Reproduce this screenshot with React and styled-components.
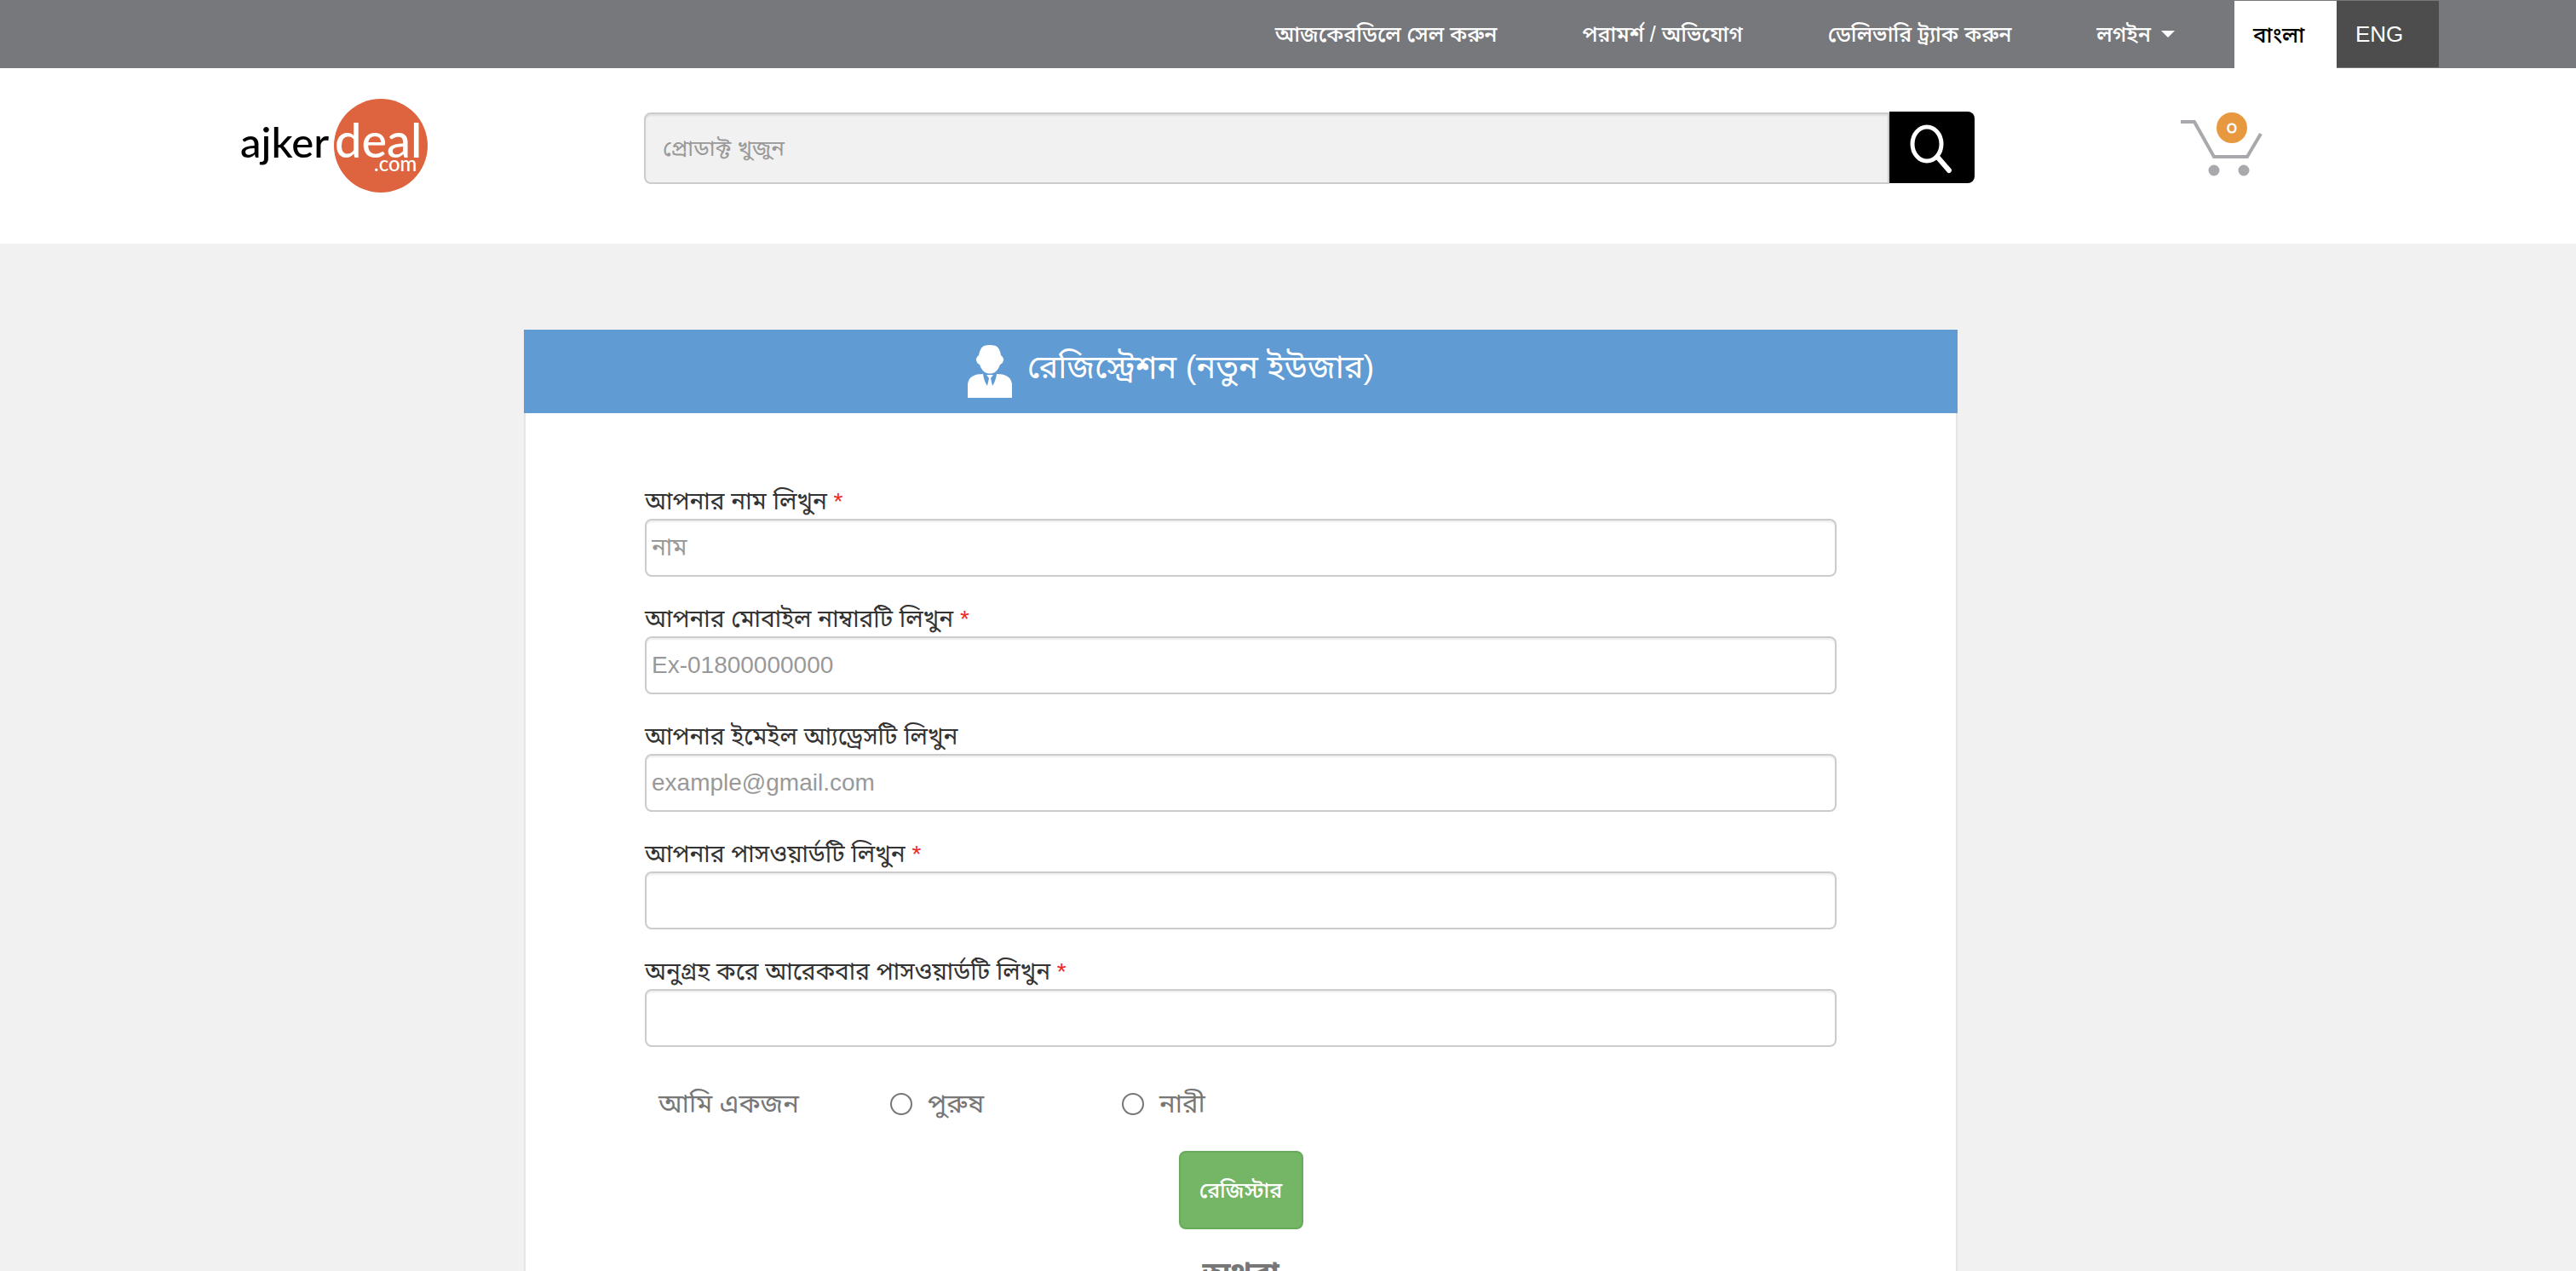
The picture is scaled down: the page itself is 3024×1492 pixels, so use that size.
import React from 'react';
import styled, { createGlobalStyle } from 'styled-components';

const Global = createGlobalStyle`
  *, *::before, *::after { box-sizing: border-box; }
  body {
    margin: 0;
    background: #f1f1f1;
    color: #333;
    font-family: "Liberation Sans", "Noto Sans Bengali", sans-serif;
    font-size: 28px;
    line-height: 40px;
  }
  #root { overflow: hidden; height: 100vh; }
  input, button { font: inherit; }
`;

const TopBar = styled.nav`
  display: flex;
  justify-content: flex-end;
  height: 80px;
  padding-right: 161px;
  background: #77787b;
  font-size: 25px;
`;

const NavLink = styled.a`
  display: flex;
  align-items: center;
  padding: 0 50px;
  color: #fff;
  font-weight: 500;
  text-decoration: none;
  white-space: nowrap;
`;

const Caret = styled.span`
  margin-left: 12px;
  border: 8px solid transparent;
  border-top-color: #fff;
  border-bottom: 0;
`;

const Languages = styled.div`
  display: flex;
  margin-left: 20px;
  padding-top: 1px;
`;

const Language = styled.button`
  width: 120px;
  height: ${(p) => (p.$active ? 79 : 78)}px;
  padding: 0 22px;
  border: 0;
  text-align: left;
  font-size: 26px;
  font-weight: 500;
  color: ${(p) => (p.$active ? '#000' : '#fff')};
  background: ${(p) => (p.$active ? '#fff' : '#4d4d4d')};
`;

const Header = styled.header`
  display: grid;
  grid-template-columns: minmax(0, 756fr) minmax(0, 1562fr) minmax(0, 706fr);
  align-items: start;
  height: 206px;
  padding-top: 35px;
  background: #fff;
`;

const LogoLink = styled.a`
  justify-self: end;
  padding-right: 252px;
  svg { display: block; }
`;

const Search = styled.form`
  display: flex;
  padding-top: 16px;
`;

const SearchInput = styled.input`
  flex: 1;
  min-width: 0;
  height: 84px;
  margin-top: 1px;
  padding: 0 20px;
  border: 2px solid #ccc;
  border-radius: 8px 0 0 8px;
  background: #f1f1f1;
  box-shadow: inset 0 2px 2px rgba(0, 0, 0, 0.075);
  font-size: 26px;
  &::placeholder { color: #999; opacity: 1; }
`;

const SearchButton = styled.button`
  width: 100px;
  height: 84px;
  padding: 0;
  border: 0;
  border-radius: 0 8px 8px 0;
  background: #000;
  svg { display: block; }
`;

const Cart = styled.a`
  position: relative;
  justify-self: start;
  margin: 16px 0 0 242px;
  svg { display: block; }
`;

const Badge = styled.span`
  position: absolute;
  top: 1px;
  left: 42px;
  width: 36px;
  height: 36px;
  border-radius: 50%;
  background: #e8983e;
  color: #fff;
  font-size: 24px;
  font-weight: 500;
  line-height: 36px;
  text-align: center;
`;

const Main = styled.main`
  display: grid;
  grid-template-columns: minmax(0, 615fr) minmax(0, 1683fr) minmax(0, 726fr);
  padding-top: 101px;
`;

const Card = styled.section`
  grid-column: 2;
  background: #fff;
  border: solid #e5e5e5;
  border-width: 0 2px;
`;

const CardHeader = styled.h1`
  display: flex;
  align-items: center;
  justify-content: center;
  gap: 18px;
  height: 98px;
  margin: 0 -2px;
  padding-right: 164px;
  background: #619bd4;
  color: #fff;
  font-size: 38px;
  font-weight: 400;
  white-space: nowrap;
`;

const CardTitle = styled.span`
  padding-bottom: 10px;
`;

const Form = styled.form`
  padding: 84px 140px 60px;
`;

const Field = styled.div`
  display: flex;
  flex-direction: column;
  margin-bottom: 30px;
`;

const Label = styled.label`
  height: 40px;
  white-space: nowrap;
`;

const Required = styled.span`
  color: #f0281e;
`;

const TextInput = styled.input`
  width: 100%;
  height: 68px;
  padding: 0 6px;
  border: 2px solid #ccc;
  border-radius: 8px;
  background: #fff;
  box-shadow: inset 0 2px 2px rgba(0, 0, 0, 0.075);
  &::placeholder { color: #999; opacity: 1; }
`;

const Gender = styled.div`
  display: flex;
  align-items: center;
  height: 50px;
  margin: 42px 0 30px;
  padding-left: 16px;
  color: #777;
  font-size: 31px;
`;

const GenderTitle = styled.span`
  width: 272px;
`;

const Choice = styled.label`
  display: flex;
  align-items: center;
  gap: 18px;
  width: 272px;
`;

const Radio = styled.input`
  appearance: none;
  width: 26px;
  height: 26px;
  margin: 0;
  border: 2px solid #767676;
  border-radius: 50%;
  background: #fff;
  &:checked { border-width: 8px; }
`;

const Actions = styled.div`
  display: flex;
  flex-direction: column;
  align-items: center;
  gap: 32px;
`;

const Submit = styled.button`
  width: 146px;
  height: 92px;
  padding: 0;
  border: 2px solid #67ac5b;
  border-radius: 8px;
  background: #74b566;
  color: #fff;
  font-size: 25px;
  font-weight: 500;
`;

const Or = styled.strong`
  color: #777;
  font-size: 36px;
`;

const Logo = () => (
  <svg width="222" height="112" viewBox="0 0 222 112" role="img" aria-label="ajkerdeal.com">
    <circle cx="165" cy="56" r="55" fill="#dd643e" />
    <g fontFamily="Lato, sans-serif" fontWeight="500">
      <text x="0" y="70" fontSize="49" fill="#000">ajker</text>
      <text x="111" y="70" fontSize="56" fill="#fff">deal</text>
      <text x="157" y="86" fontSize="24" fill="#fff">.com</text>
    </g>
  </svg>
);

const SearchIcon = () => (
  <svg width="100" height="84" fill="none" stroke="#fff" strokeLinecap="round">
    <ellipse cx="44" cy="38" rx="17" ry="20" strokeWidth="5" />
    <path d="M57 54 70 69" strokeWidth="6" />
  </svg>
);

const CartIcon = () => (
  <svg width="100" height="78" fill="none">
    <path d="M0 12H16L39 53H78L94 26" stroke="#a7a9ac" strokeWidth="4" />
    <circle cx="39" cy="69" r="6.5" fill="#a7a9ac" />
    <circle cx="74" cy="69" r="6.5" fill="#a7a9ac" />
  </svg>
);

const UserIcon = () => (
  <svg width="52" height="62" fill="#fff">
    <path d="M19 1Q26 -1 33 1Q38 4 39 12Q43 15 42 18Q41 22 38 23Q36 29 32 32Q26 35 20 32Q16 29 14 23Q11 22 10 18Q9 15 13 12Q14 4 19 1Z" />
    <path d="M0 62V46C1 37 8 34 18 34Q19 42 23 48L25 39L22 35H30L27 39L29 48Q33 42 34 34C44 34 51 37 52 46V62Z" />
  </svg>
);

const navItems = ['আজকেরডিলে সেল করুন', 'পরামর্শ / অভিযোগ', 'ডেলিভারি ট্র্যাক করুন'];

const fields = [
  { id: 'name', label: 'আপনার নাম লিখুন', placeholder: 'নাম', type: 'text', required: true },
  { id: 'mobile', label: 'আপনার মোবাইল নাম্বারটি লিখুন', placeholder: 'Ex-01800000000', type: 'tel', required: true },
  { id: 'email', label: 'আপনার ইমেইল আ্যড্রেসটি লিখুন', placeholder: 'example@gmail.com', type: 'email' },
  { id: 'password', label: 'আপনার পাসওয়ার্ডটি লিখুন', type: 'password', required: true },
  { id: 'confirm', label: 'অনুগ্রহ করে আরেকবার পাসওয়ার্ডটি লিখুন', type: 'password', required: true },
];

export default function App() {
  return (
    <>
      <Global />
      <TopBar>
        {navItems.map((item) => (
          <NavLink href="#" key={item}>{item}</NavLink>
        ))}
        <NavLink href="#">লগইন<Caret /></NavLink>
        <Languages>
          <Language type="button" $active>বাংলা</Language>
          <Language type="button">ENG</Language>
        </Languages>
      </TopBar>
      <Header>
        <LogoLink href="#"><Logo /></LogoLink>
        <Search>
          <SearchInput type="text" placeholder="প্রোডাক্ট খুজুন" aria-label="প্রোডাক্ট খুজুন" />
          <SearchButton type="button" aria-label="Search"><SearchIcon /></SearchButton>
        </Search>
        <Cart href="#" aria-label="Cart">
          <CartIcon />
          <Badge>০</Badge>
        </Cart>
      </Header>
      <Main>
        <Card>
          <CardHeader>
            <UserIcon />
            <CardTitle>রেজিস্ট্রেশন (নতুন ইউজার)</CardTitle>
          </CardHeader>
          <Form>
            {fields.map((f) => (
              <Field key={f.id}>
                <Label htmlFor={f.id}>
                  {f.label} {f.required && <Required>*</Required>}
                </Label>
                <TextInput id={f.id} type={f.type} placeholder={f.placeholder} />
              </Field>
            ))}
            <Gender role="radiogroup" aria-labelledby="gender-title">
              <GenderTitle id="gender-title">আমি একজন</GenderTitle>
              <Choice><Radio type="radio" name="gender" value="male" />পুরুষ</Choice>
              <Choice><Radio type="radio" name="gender" value="female" />নারী</Choice>
            </Gender>
            <Actions>
              <Submit type="button">রেজিস্টার</Submit>
              <Or>অথবা</Or>
            </Actions>
          </Form>
        </Card>
      </Main>
    </>
  );
}
